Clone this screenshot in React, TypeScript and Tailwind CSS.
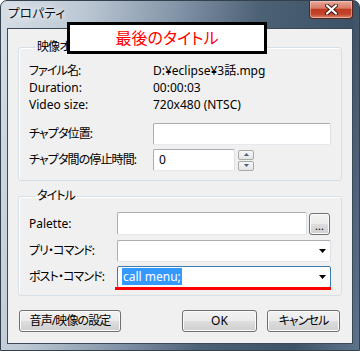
import type { ReactNode } from "react";

const btn =
  "flex h-[22px] items-center justify-center rounded-[3px] border border-[#707070] bg-[linear-gradient(to_bottom,#f2f2f2_0%,#ebebeb_48%,#dddddd_52%,#cfcfcf_100%)] shadow-[inset_0_0_0_1px_#fbfbfb]";

const field = "h-[22px] rounded-[2px] border border-[#abadb3] border-b-[#e3e9ef] border-r-[#dbdfe6] bg-white";

// japanese text is narrower in the original UI font
const jp = "tracking-[-0.9px]";

const Arrow = () => (
  <svg width="7" height="4" viewBox="0 0 7 4" className="shrink-0">
    <path d="M0 0h7L3.5 4z" fill="#000" />
  </svg>
);

const Combo = ({ focused, children }: { focused?: boolean; children?: ReactNode }) => (
  <div
    className={
      focused
        ? "flex h-[22px] w-[214px] items-center rounded-[2px] border border-[#3d7bad] bg-white pl-[4px] pr-[4px]"
        : "flex h-[22px] w-[214px] items-center rounded-[2px] border border-[#abadb3] border-b-[#e3e9ef] border-r-[#dbdfe6] bg-white pl-[4px] pr-[4px]"
    }
  >
    <div className="flex-1">{children}</div>
    <Arrow />
  </div>
);

const Legend = ({ children }: { children: ReactNode }) => (
  <legend className={`ml-[6px] px-[2px] leading-[16px] ${jp}`}>{children}</legend>
);

export default function App() {
  return (
    <div className="relative h-[351px] w-[360px] overflow-hidden rounded-t-[7px] border border-[#33414f] bg-[linear-gradient(100deg,#d6dee6_0%,#bcc8d4_20%,#8395a8_42%,#4d6175_62%,#3e5267_84%,#5d7389_100%)] font-['Noto_Sans','Noto_Sans_CJK_JP',sans-serif] text-[12px] text-black [font-feature-settings:'palt']">
      {/* title bar */}
      <div className="flex h-[27px] items-start justify-between">
        <span className="pl-[7px] pt-[5px] text-[12.5px] leading-[16px] tracking-[0.3px] text-[#111] [text-shadow:0_0_6px_#fff,0_0_10px_#fff]">
          プロパティ
        </span>
        <div className="mr-[6px] flex h-[18px] w-[44px] items-center justify-center rounded-b-[4px] border border-t-0 border-[#512720] bg-[linear-gradient(to_bottom,#e9aa9b_0%,#d77b66_42%,#c23b1e_50%,#c0452d_78%,#dc8a70_100%)] shadow-[inset_0_0_0_1px_rgba(255,220,210,0.45)]">
          <svg width="13" height="11" viewBox="0 0 13 11">
            <path d="M2 1.5l9 8M11 1.5l-9 8" stroke="#3b1a14" strokeWidth="4" strokeLinecap="round" />
            <path d="M2 1.5l9 8M11 1.5l-9 8" stroke="#fff" strokeWidth="2.2" strokeLinecap="round" />
          </svg>
        </div>
      </div>

      {/* client area */}
      <div className="mx-[6px] h-[316px] border border-[#3b4958] bg-[#f0f0f0] pl-[10px] pr-[11px] pt-[10px]">
        <fieldset className="rounded-[3px] border border-[#d5dfe5] pb-[9px] pl-[10px] pr-[10px] shadow-[inset_1px_1px_0_#fff]">
          <Legend>映像オプション</Legend>
          <div className="pt-[7px]">
            <div className="flex h-[17px] items-center">
              <span className={`w-[124px] ${jp}`}>ファイル名:</span>
              <span>D:¥eclipse¥3話.mpg</span>
            </div>
            <div className="flex h-[17px] items-center">
              <span className="w-[124px]">Duration:</span>
              <span>00:00:03</span>
            </div>
            <div className="flex h-[17px] items-center">
              <span className="w-[124px]">Video size:</span>
              <span>720x480 (NTSC)</span>
            </div>
            <div className="mt-[10px] flex items-center">
              <span className={`w-[124px] ${jp}`}>チャプタ位置:</span>
              <div className={`${field} w-[178px]`} />
            </div>
            <div className="mt-[4px] flex items-center">
              <span className={`w-[124px] ${jp}`}>チャプタ間の停止時間:</span>
              <div className={`${field} flex w-[82px] items-center pl-[5px]`}>0</div>
              <div className="ml-[3px] flex h-[22px] w-[16px] flex-col justify-center gap-[1px]">
                <div className="flex h-[10px] items-center justify-center rounded-[2px] border border-[#a9a9a9] bg-[linear-gradient(to_bottom,#f6f6f6,#e4e4e4)]">
                  <svg width="5" height="3" viewBox="0 0 5 3">
                    <path d="M0 3h5L2.5 0z" fill="#4c607f" />
                  </svg>
                </div>
                <div className="flex h-[10px] items-center justify-center rounded-[2px] border border-[#a9a9a9] bg-[linear-gradient(to_bottom,#f6f6f6,#e4e4e4)]">
                  <svg width="5" height="3" viewBox="0 0 5 3">
                    <path d="M0 0h5L2.5 3z" fill="#4c607f" />
                  </svg>
                </div>
              </div>
            </div>
          </div>
        </fieldset>

        <fieldset className="mt-[7px] rounded-[3px] border border-[#d5dfe5] pb-[7px] pl-[10px] pr-[10px] shadow-[inset_1px_1px_0_#fff]">
          <Legend>タイトル</Legend>
          <div className="pt-[8px]">
            <div className="flex items-center">
              <span className="w-[88px]">Palette:</span>
              <div className="h-[23px] w-[190px] rounded-[2px] border border-[#abadb3] border-b-[#e3e9ef] border-r-[#dbdfe6] bg-white" />
              <div className={`${btn} ml-[2px] h-[22px] w-[21px] pt-[4px] text-[11px] leading-none`}>...</div>
            </div>
            <div className="mt-[5px] flex items-center">
              <span className={`w-[88px] ${jp}`}>プリ・コマンド:</span>
              <Combo />
            </div>
            <div className="mt-[4px] flex items-center">
              <span className={`w-[88px] ${jp}`}>ポスト・コマンド:</span>
              <Combo focused>
                <span className="bg-[#3399ff] px-px text-white">call menu;</span>
              </Combo>
            </div>
          </div>
        </fieldset>

        {/* buttons */}
        <div className="mt-[14px] flex items-center justify-between pl-px pr-px">
          <div className={`${btn} w-[102px] ${jp}`}>音声/映像の設定</div>
          <div className="flex gap-[10px]">
            <div className={`${btn} w-[75px] border-[#3c7fb1] shadow-[inset_0_0_0_1px_#bfe4f8]`}>OK</div>
            <div className={`${btn} w-[73px] ${jp}`}>キャンセル</div>
          </div>
        </div>
      </div>

      {/* annotation overlays */}
      <div className="absolute left-[66px] top-[21px] flex h-[32px] w-[200px] items-center justify-center border-[3px] border-black bg-white text-[16px] text-[#ff0000]">
        最後のタイトル
      </div>
      <div className="absolute left-[114px] top-[286px] h-[3px] w-[216px] bg-[#ff0000]" />
    </div>
  );
}
